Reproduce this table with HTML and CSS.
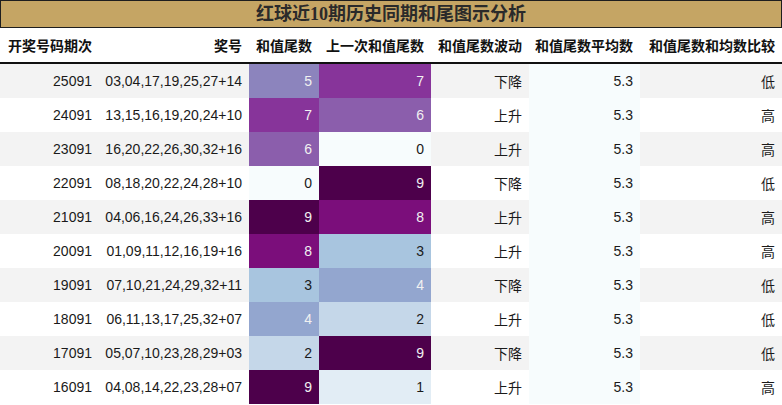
FILE: index.html
```html
<!DOCTYPE html>
<html lang="zh">
<head>
<meta charset="utf-8">
<title>红球近10期历史同期和尾图示分析</title>
<link rel="stylesheet" href="styles.css">
</head>
<body>
<div class="title">红球近10期历史同期和尾图示分析</div>
<table class="grid">
  <colgroup>
    <col class="c1"><col class="c2"><col class="c3"><col class="c4"><col class="c5"><col class="c6"><col class="c7">
  </colgroup>
  <thead>
    <tr><th>开奖号码期次</th><th>奖号</th><th>和值尾数</th><th>上一次和值尾数</th><th>和值尾数波动</th><th>和值尾数平均数</th><th>和值尾数和均数比较</th></tr>
  </thead>
  <tbody>
    <tr class="odd"><td>25091</td><td>03,04,17,19,25,27+14</td><td class="v5">5</td><td class="v7">7</td><td>下降</td><td class="avg">5.3</td><td>低</td></tr>
    <tr><td>24091</td><td>13,15,16,19,20,24+10</td><td class="v7">7</td><td class="v6">6</td><td>上升</td><td class="avg">5.3</td><td>高</td></tr>
    <tr class="odd"><td>23091</td><td>16,20,22,26,30,32+16</td><td class="v6">6</td><td class="v0">0</td><td>上升</td><td class="avg">5.3</td><td>高</td></tr>
    <tr><td>22091</td><td>08,18,20,22,24,28+10</td><td class="v0">0</td><td class="v9">9</td><td>下降</td><td class="avg">5.3</td><td>低</td></tr>
    <tr class="odd"><td>21091</td><td>04,06,16,24,26,33+16</td><td class="v9">9</td><td class="v8">8</td><td>上升</td><td class="avg">5.3</td><td>高</td></tr>
    <tr><td>20091</td><td>01,09,11,12,16,19+16</td><td class="v8">8</td><td class="v3">3</td><td>上升</td><td class="avg">5.3</td><td>高</td></tr>
    <tr class="odd"><td>19091</td><td>07,10,21,24,29,32+11</td><td class="v3">3</td><td class="v4">4</td><td>下降</td><td class="avg">5.3</td><td>低</td></tr>
    <tr><td>18091</td><td>06,11,13,17,25,32+07</td><td class="v4">4</td><td class="v2">2</td><td>上升</td><td class="avg">5.3</td><td>低</td></tr>
    <tr class="odd"><td>17091</td><td>05,07,10,23,28,29+03</td><td class="v2">2</td><td class="v9">9</td><td>下降</td><td class="avg">5.3</td><td>低</td></tr>
    <tr><td>16091</td><td>04,08,14,22,23,28+07</td><td class="v9">9</td><td class="v1">1</td><td>上升</td><td class="avg">5.3</td><td>高</td></tr>
  </tbody>
</table>
</body>
</html>
```
FILE: styles.css
```css
html, body {
  margin: 0;
  padding: 0;
  background: #ffffff;
}
body {
  width: 782px;
  font-family: "Liberation Sans", "Noto Sans CJK SC", sans-serif;
  font-size: 14px;
  color: #1a1a1a;
}
.title {
  box-sizing: border-box;
  height: 28px;
  width: 782px;
  border: 1px solid #1e1e1e;
  background: #c5a564;
  color: #2a2a2a;
  font-family: "Liberation Serif", "Noto Sans CJK SC", serif;
  font-weight: bold;
  font-size: 18px;
  line-height: 26px;
  text-align: center;
}
.grid {
  border-collapse: collapse;
  table-layout: fixed;
  width: 782px;
}
.c1 { width: 99px; }
.c2 { width: 150px; }
.c3 { width: 70px; }
.c4 { width: 112px; }
.c5 { width: 98px; }
.c6 { width: 111px; }
.c7 { width: 142px; }
th, td {
  padding: 0 7px 0 0;
  text-align: right;
  white-space: nowrap;
  overflow: hidden;
}
th {
  height: 34px;
  font-weight: bold;
  color: #111;
  border-bottom: 2px solid #111;
}
th:first-child { text-align: left; padding-left: 8px; }
td { height: 34px; }
tr.odd td { background: #f3f3f3; }
td.avg, tr.odd td.avg { background: #f7fcfd; color: #1a1a1a; }
td.v0, tr.odd td.v0 { background: #f7fcfd; color: #1a1a1a; }
td.v1, tr.odd td.v1 { background: #e2edf5; color: #1a1a1a; }
td.v2, tr.odd td.v2 { background: #c5d7e9; color: #1a1a1a; }
td.v3, tr.odd td.v3 { background: #a8c5df; color: #1a1a1a; }
td.v4, tr.odd td.v4 { background: #93a6cf; color: #f1f1f1; }
td.v5, tr.odd td.v5 { background: #8c84bd; color: #f1f1f1; }
td.v6, tr.odd td.v6 { background: #8b5eac; color: #f1f1f1; }
td.v7, tr.odd td.v7 { background: #87349a; color: #f1f1f1; }
td.v8, tr.odd td.v8 { background: #7b0e7b; color: #f1f1f1; }
td.v9, tr.odd td.v9 { background: #4d004b; color: #f1f1f1; }
```
